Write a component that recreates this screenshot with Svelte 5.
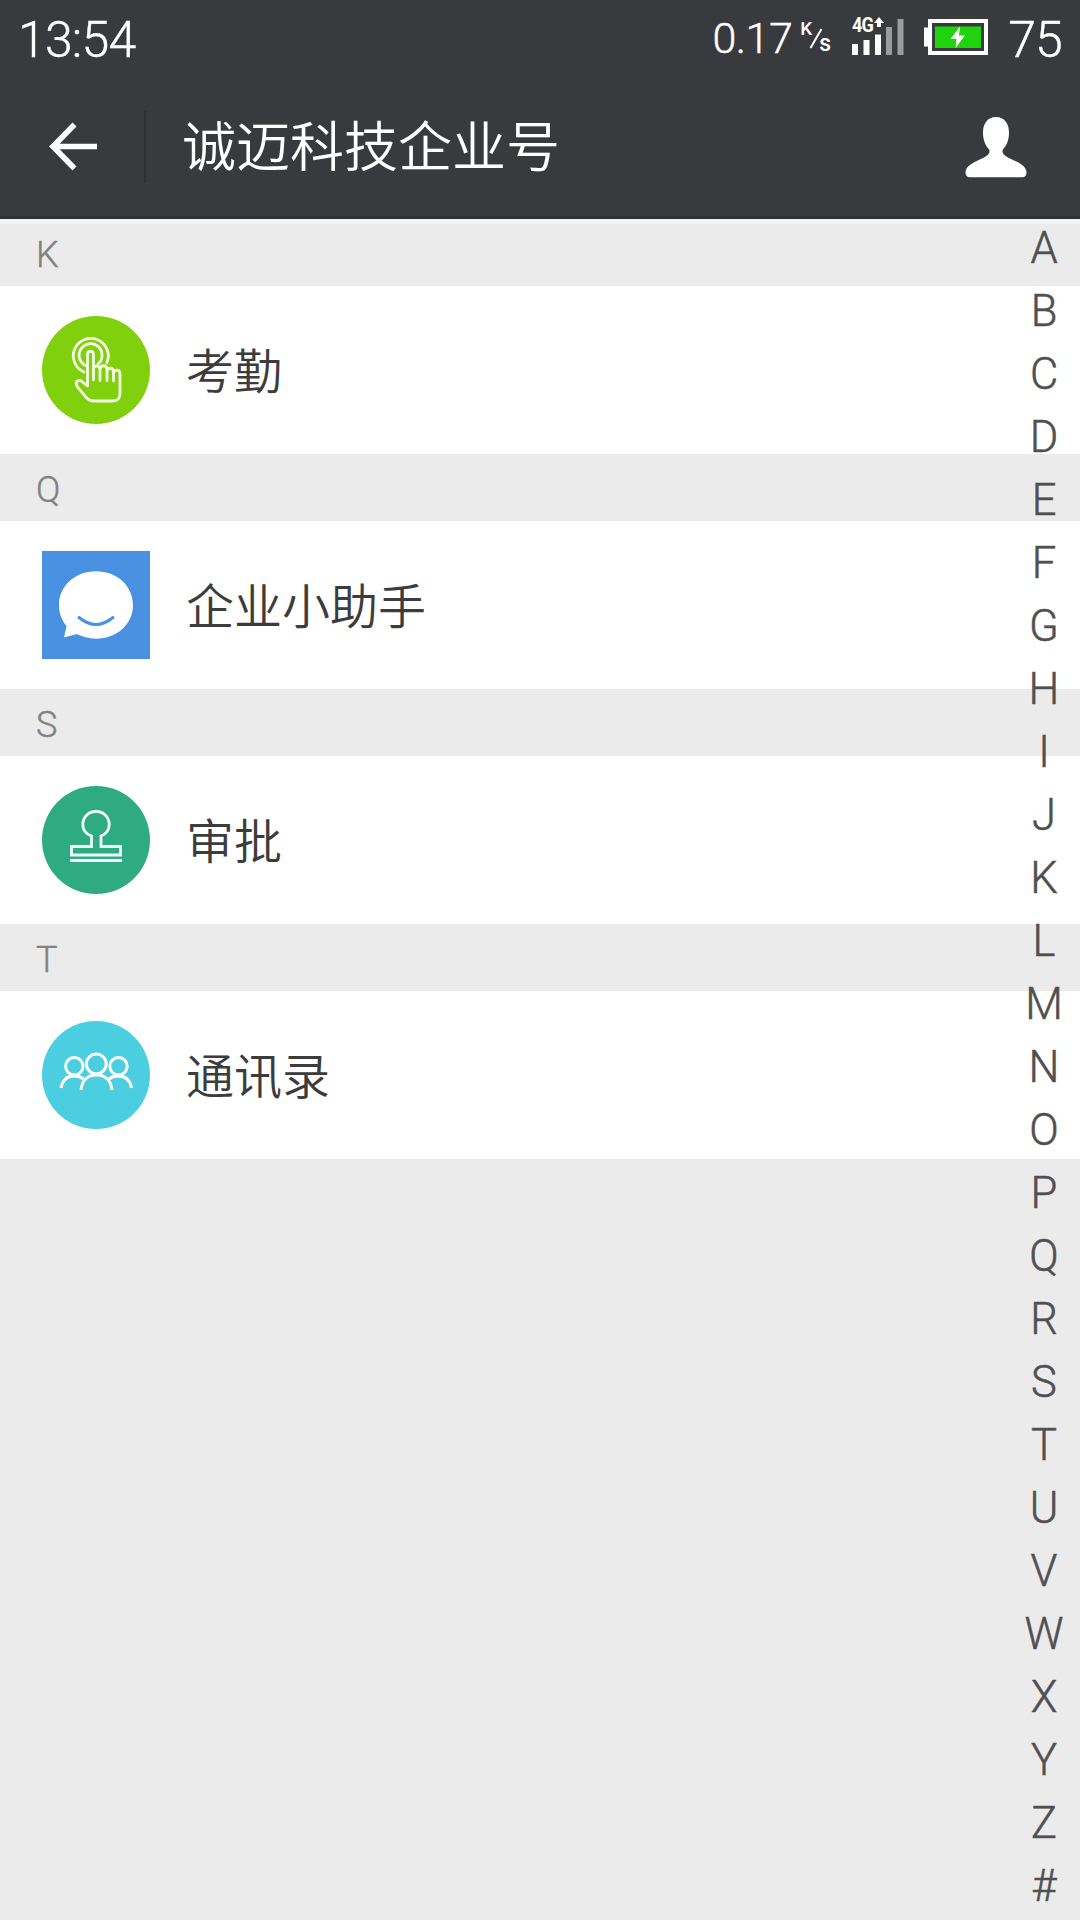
<script lang="ts">
  type Contact = { letter: string; name: string; icon: string };

  const contacts: Contact[] = [
    { letter: "K", name: "考勤", icon: "touch" },
    { letter: "Q", name: "企业小助手", icon: "chat" },
    { letter: "S", name: "审批", icon: "stamp" },
    { letter: "T", name: "通讯录", icon: "people" },
  ];

  const letters = "ABCDEFGHIJKLMNOPQRSTUVWXYZ#".split("");
</script>

<div class="screen">
  <header>
    <div class="status">
      <span class="time">13:54</span>
      <div class="indicators">
        <span class="speed">0.17</span>
        <span class="unit"><i>K</i><svg width="14" height="22" viewBox="0 0 14 22"><path d="M12.500 1L1.500 20" stroke="#fff" stroke-width="2" /></svg><i class="per">s</i></span>
        <div class="network">
          <span>4G</span>
          <svg class="signal" width="52" height="40" viewBox="0 0 52 40">
            <path d="M27 1l5 6h-3v4h-4v-4h-3z" fill="#fff" />
            <path d="M0 28h6v11h-6zM11.500 24h6v15h-6zM23 18.500h6v20.500h-6z" fill="#fff" />
            <path d="M34 11h6v28h-6zM45.500 3h6v36h-6z" fill="#9b9c9d" />
          </svg>
        </div>
        <svg class="battery" width="64" height="36" viewBox="0 0 64 36">
          <rect x="6" y="2" width="56" height="32" fill="none" stroke="#fff" stroke-width="4" />
          <path d="M0 8.500h5v19H0z" fill="#fff" />
          <rect x="11" y="7.500" width="46" height="21.500" fill="#1fd30d" />
          <path d="M36 7.500L26.500 20h6L31.500 29L41 16.500h-6z" fill="#fff" />
        </svg>
        <span class="level">75</span>
      </div>
    </div>
    <div class="bar">
      <svg class="back" width="50" height="50" viewBox="0 0 50 50">
        <path d="M25.500 2.500L4 24.500L25.500 46.500M4 24.500H48" fill="none" stroke="#fff" stroke-width="5.600" />
      </svg>
      <div class="divider"></div>
      <h1>诚迈科技企业号</h1>
      <svg class="user" width="62" height="61" viewBox="0 0 62 61">
        <path d="M31 0C39.500 0 44 6.500 44 15.500C44 24 41 29.500 37.800 32.500C36.700 36 38.500 38 43 40.500C51 44.500 61.500 48 61.500 55.500C61.500 58.500 60 60.300 57 60.300H5C2 60.300 .5 58.500 .5 55.500C.5 48 11 44.500 19 40.500C23.500 38 25.300 36 24.200 32.500C21 29.500 18 24 18 15.500C18 6.500 22.500 0 31 0Z" fill="#fff" />
      </svg>
    </div>
  </header>

  <main>
    {#each contacts as c, i}
      <section>
        <div class="letter" class:first={i === 0}>{c.letter}</div>
        <div class="row">
          <svg class="icon" width="108" height="108" viewBox="0 0 108 108">
            {#if c.icon === "touch"}
              <circle cx="54" cy="54" r="54" fill="#80d00e" />
              <g fill="none" stroke="#f4fde4" stroke-width="2.800" stroke-linejoin="round" stroke-linecap="round">
                <path d="M42 56A17.500 17.500 0 1 1 65 46.500" />
                <path d="M43.500 49.500A11.500 11.500 0 1 1 56 48" />
                <path d="M51.500 64V39C51.500 34 45.500 34 45.500 39V70L40 65.500C37 63 33 65.500 34.500 69C35.500 72 39 74.500 41 77.500C43.500 81 46 85 51 85H71C75.500 85 78 82 78 78V58C78 53 71.500 53 71.500 58V65M71.500 58V56C71.500 51 65 51 65 56V64.500M65 56V53.500C65 48.500 58.500 48.500 58 53.500V64.500M58 53C57.500 49.500 53 49.500 51.500 51.500" />
              </g>
            {:else if c.icon === "chat"}
              <rect width="108" height="108" fill="#4a90e0" />
              <path d="M54 20.300C75 20.300 91 35 91 54C91 73 75 87.700 54 87.700C47 87.700 40 85.500 35 83L22 86.500L24.500 75C19.500 69 17 62 17 54C17 35 33 20.300 54 20.300Z" fill="#fff" />
              <path d="M37 66.500Q54 80.500 71 66.500" fill="none" stroke="#4a90e0" stroke-width="3" stroke-linecap="round" />
            {:else if c.icon === "stamp"}
              <circle cx="54" cy="54" r="54" fill="#2eab80" />
              <g fill="none" stroke="#f0fffa" stroke-width="2.800">
                <path d="M49.500 60.500V50C44 48 40.800 44 40.800 38.500C40.800 31 46.500 25.500 54 25.500S67.200 31 67.200 38.500C67.200 44 64 48 59 50V60.500H78.500V69H29.500V60.500Z" />
                <path d="M28 74.500H80" />
              </g>
            {:else}
              <circle cx="54" cy="54" r="54" fill="#4bcfe0" />
              <g fill="none" stroke="#fff" stroke-width="3">
                <circle cx="54.300" cy="43" r="9.900" />
                <circle cx="32.300" cy="45.300" r="8.700" />
                <circle cx="76.500" cy="45.300" r="8.700" />
                <path d="M39 69C40 59 46 54 54.300 54S69 59 70 69M19 67C20.500 59 25 55 32 55C36 55 39 56 41.500 58M89.500 67C88 59 83.500 55 76.500 55C72.500 55 69.500 56 67 58" />
              </g>
            {/if}
          </svg>
          <span class="name">{c.name}</span>
        </div>
      </section>
    {/each}
    <nav>
      {#each letters as l}
        <span>{l}</span>
      {/each}
    </nav>
  </main>
</div>

<style>
  :global(body) {
    margin: 0;
    background: #ebebeb;
  }

  .screen {
    width: 1080px;
    height: 1920px;
    overflow: hidden;
    background: #ebebeb;
    font-family: Roboto, "Noto Sans CJK SC", sans-serif;
    font-weight: 300;
  }

  header {
    height: 219px;
    box-sizing: border-box;
    background: #393a3d;
    border-bottom: 3px solid #303133;
    color: #fff;
  }

  .status {
    height: 76px;
    padding: 0 18px;
    display: flex;
    justify-content: space-between;
  }

  .time, .level {
    font-size: 50px;
    line-height: 80px;
    letter-spacing: -0.8px;
    -webkit-text-stroke: 0.4px #fff;
  }

  .indicators {
    display: flex;
    align-items: flex-start;
  }

  .speed {
    font-size: 43px;
    line-height: 76px;
    letter-spacing: -0.5px;
    -webkit-text-stroke: 0.4px #fff;
  }

  .unit {
    display: flex;
    margin: 22px 21px 0 8px;
  }

  .unit i {
    font-size: 19px;
    line-height: 14px;
    font-style: normal;
    font-weight: 500;
  }

  .unit svg {
    margin: 6px -4px 0 -3px;
  }

  .unit .per {
    font-size: 23px;
    line-height: 44px;
  }

  .network {
    display: grid;
    margin-top: 16px;
  }

  .network span, .signal {
    grid-area: 1 / 1;
  }

  .network span {
    height: 20px;
    font-size: 21px;
    line-height: 19px;
    font-weight: 700;
    letter-spacing: -1px;
    transform: scaleX(0.86);
    transform-origin: left;
  }

  .battery {
    margin: 19px 20px 0 20px;
  }

  .bar {
    height: 140px;
    display: flex;
    align-items: center;
    padding: 1px 53px 0 49px;
  }

  .divider {
    width: 2px;
    height: 72px;
    margin-left: 45px;
    background: #2e2f31;
  }

  h1 {
    flex: 1;
    margin: 3px 0 0 36px;
    font-size: 54px;
    line-height: 80px;
    font-weight: 350;
  }

  main {
    position: relative;
  }

  .letter {
    height: 67px;
    padding-left: 36px;
    font-size: 36px;
    line-height: 72px;
    color: #828282;
    -webkit-text-stroke: 0.4px #828282;
  }

  .letter.first {
    border-top: 5px solid #f2f2f2;
    height: 62px;
    line-height: 62px;
  }

  .row {
    height: 168px;
    display: flex;
    align-items: center;
    padding-left: 42px;
    background: #fff;
  }

  .name {
    margin: -5px 0 0 36px;
    font-size: 48px;
    font-weight: 350;
    color: #3c3c3c;
  }

  nav {
    position: absolute;
    top: -2px;
    right: 6px;
    width: 60px;
    display: flex;
    flex-direction: column;
    text-align: center;
    font-size: 43.5px;
    line-height: 63px;
    color: #505050;
    -webkit-text-stroke: 0.5px #505050;
  }
</style>
